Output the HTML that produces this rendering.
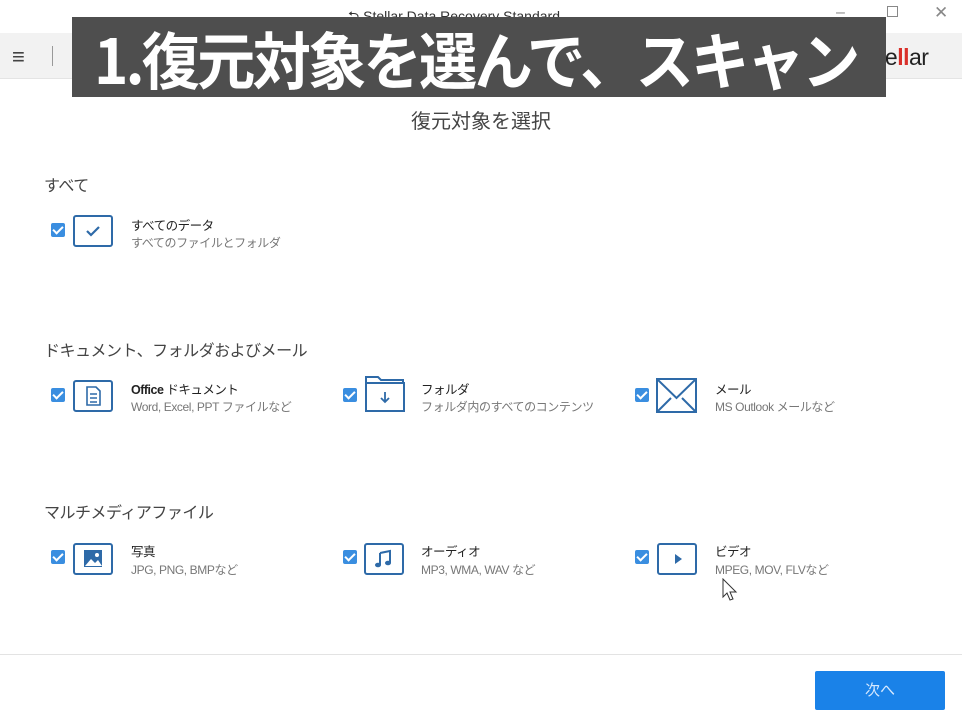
<!DOCTYPE html>
<html><head><meta charset="utf-8"><style>
*{margin:0;padding:0;box-sizing:border-box}
body{width:962px;height:720px;background:#fff;position:relative;overflow:hidden;font-family:"Liberation Sans","Noto Sans CJK JP",sans-serif;color:#333}
.abs{position:absolute}
.tb{left:0;top:33px;width:962px;height:46px;background:#f2f2f2;border-bottom:1px solid #e4e4e4}
.overlay{left:72px;top:17px;width:814px;height:80px;background:#4e4e4e;overflow:hidden}
.overlay span{position:absolute;left:22px;top:0;color:#fff;font-weight:bold;font-size:62px;line-height:80px;letter-spacing:-3px;white-space:nowrap;font-family:"Noto Sans CJK JP",sans-serif;transform:scaleX(0.94);transform-origin:left center}
.sec{font-size:16px;color:#444;left:44px;letter-spacing:-0.5px}
.cb{width:14px;height:14px;background:#3a8ee0;border-radius:2px}
.cb:after{content:"";position:absolute;left:4px;top:1px;width:4px;height:8px;border:solid #fff;border-width:0 2px 2px 0;transform:rotate(45deg)}
.ic{width:40px;height:32px;border:2px solid #2e6aa8;border-radius:3px}
.t1{font-size:12.5px;color:#222;letter-spacing:-0.5px}
.t2{font-size:12px;color:#777;letter-spacing:-0.4px}
</style></head><body>
<div class="abs" style="left:348px;top:6px;font-size:14px;color:#333">⮌ Stellar Data Recovery Standard</div>
<div class="abs" style="left:836px;top:4px;font-size:16px;color:#888">–</div>
<div class="abs" style="left:887px;top:6px;width:11px;height:11px;border:1px solid #888"></div>
<div class="abs" style="left:934px;top:3px;font-size:17px;color:#888">✕</div>
<div class="abs tb"></div>
<div class="abs" style="left:12px;top:44px;font-size:22px;color:#444">≡</div>
<div class="abs" style="left:52px;top:46px;width:1px;height:20px;background:#999"></div>
<div class="abs" style="left:868px;top:44px;font-size:23px;color:#222;letter-spacing:-0.5px">ste<span style="color:#d9302a;font-weight:bold">ll</span>ar</div>
<div class="abs overlay"><span>1.復元対象を選んで、スキャン</span></div>
<div class="abs" style="left:0;width:962px;top:105px;text-align:center;font-size:20px;color:#444">復元対象を選択</div>

<div class="abs sec" style="top:172px">すべて</div>
<div class="abs cb" style="left:51px;top:223px"></div>
<div class="abs ic" style="left:73px;top:215px"><svg width="36" height="28"><path d="M12 14l4 4 8-8" fill="none" stroke="#2e6aa8" stroke-width="2.2"/></svg></div>
<div class="abs t1" style="left:131px;top:215px">すべてのデータ</div>
<div class="abs t2" style="left:131px;top:234px">すべてのファイルとフォルダ</div>

<div class="abs sec" style="top:337px">ドキュメント、フォルダおよびメール</div>
<div class="abs cb" style="left:51px;top:388px"></div>
<div class="abs ic" style="left:73px;top:380px"><svg width="36" height="28"><path d="M12 5h9l4 4v14H12z M15 12h7 M15 16h7 M15 20h7" fill="none" stroke="#2e6aa8" stroke-width="1.6"/></svg></div>
<div class="abs t1" style="left:131px;top:379px"><b>Office</b> ドキュメント</div>
<div class="abs t2" style="left:131px;top:398px">Word, Excel, PPT ファイルなど</div>

<div class="abs cb" style="left:343px;top:388px"></div>
<div class="abs" style="left:364px;top:373px"><svg width="42" height="40"><path d="M2 10V4h12l3 3h22v4 M2 38V10h38v28z" fill="none" stroke="#2e6aa8" stroke-width="2"/><path d="M21 19v10 M17 25l4 4 4-4" fill="none" stroke="#2e6aa8" stroke-width="1.8"/></svg></div>
<div class="abs t1" style="left:421px;top:379px">フォルダ</div>
<div class="abs t2" style="left:421px;top:398px">フォルダ内のすべてのコンテンツ</div>

<div class="abs cb" style="left:635px;top:388px"></div>
<div class="abs" style="left:656px;top:378px"><svg width="42" height="36"><path d="M1 1h39v33H1z M1 1l19.5 19L40 1 M1 34l14-14 M40 34L26 20" fill="none" stroke="#2e6aa8" stroke-width="2"/></svg></div>
<div class="abs t1" style="left:715px;top:379px">メール</div>
<div class="abs t2" style="left:715px;top:398px">MS Outlook メールなど</div>

<div class="abs sec" style="top:499px">マルチメディアファイル</div>
<div class="abs cb" style="left:51px;top:550px"></div>
<div class="abs ic" style="left:73px;top:543px"><svg width="36" height="28"><rect x="9" y="5" width="18" height="17" fill="#2e6aa8"/><path d="M10 21l6-7 4 4 3-3 4 6z" fill="#fff"/><circle cx="22" cy="10" r="2" fill="#fff"/></svg></div>
<div class="abs t1" style="left:131px;top:541px">写真</div>
<div class="abs t2" style="left:131px;top:561px">JPG, PNG, BMPなど</div>

<div class="abs cb" style="left:343px;top:550px"></div>
<div class="abs ic" style="left:364px;top:543px"><svg width="36" height="28"><path d="M14 8l10-2v12 M14 8v12" fill="none" stroke="#2e6aa8" stroke-width="2"/><ellipse cx="12" cy="20" rx="3" ry="2.3" fill="#2e6aa8"/><ellipse cx="22" cy="18" rx="3" ry="2.3" fill="#2e6aa8"/></svg></div>
<div class="abs t1" style="left:421px;top:541px">オーディオ</div>
<div class="abs t2" style="left:421px;top:561px">MP3, WMA, WAV など</div>

<div class="abs cb" style="left:635px;top:550px"></div>
<div class="abs ic" style="left:657px;top:543px"><svg width="36" height="28"><path d="M16 9l7 5-7 5z" fill="#2e6aa8"/></svg></div>
<div class="abs t1" style="left:715px;top:541px">ビデオ</div>
<div class="abs t2" style="left:715px;top:561px">MPEG, MOV, FLVなど</div>
<div class="abs" style="left:722px;top:578px"><svg width="16" height="24"><path d="M1 1v18l4-4 3 7 3-1-3-7h6z" fill="#fff" stroke="#333" stroke-width="1"/></svg></div>

<div class="abs" style="left:0;top:654px;width:962px;height:1px;background:#e3e3e3"></div>
<div class="abs" style="left:815px;top:671px;width:130px;height:39px;background:#1a82e8;border-radius:2px;color:#d6e9ff;font-size:15px;text-align:center;line-height:39px">次へ</div>
</body></html>
